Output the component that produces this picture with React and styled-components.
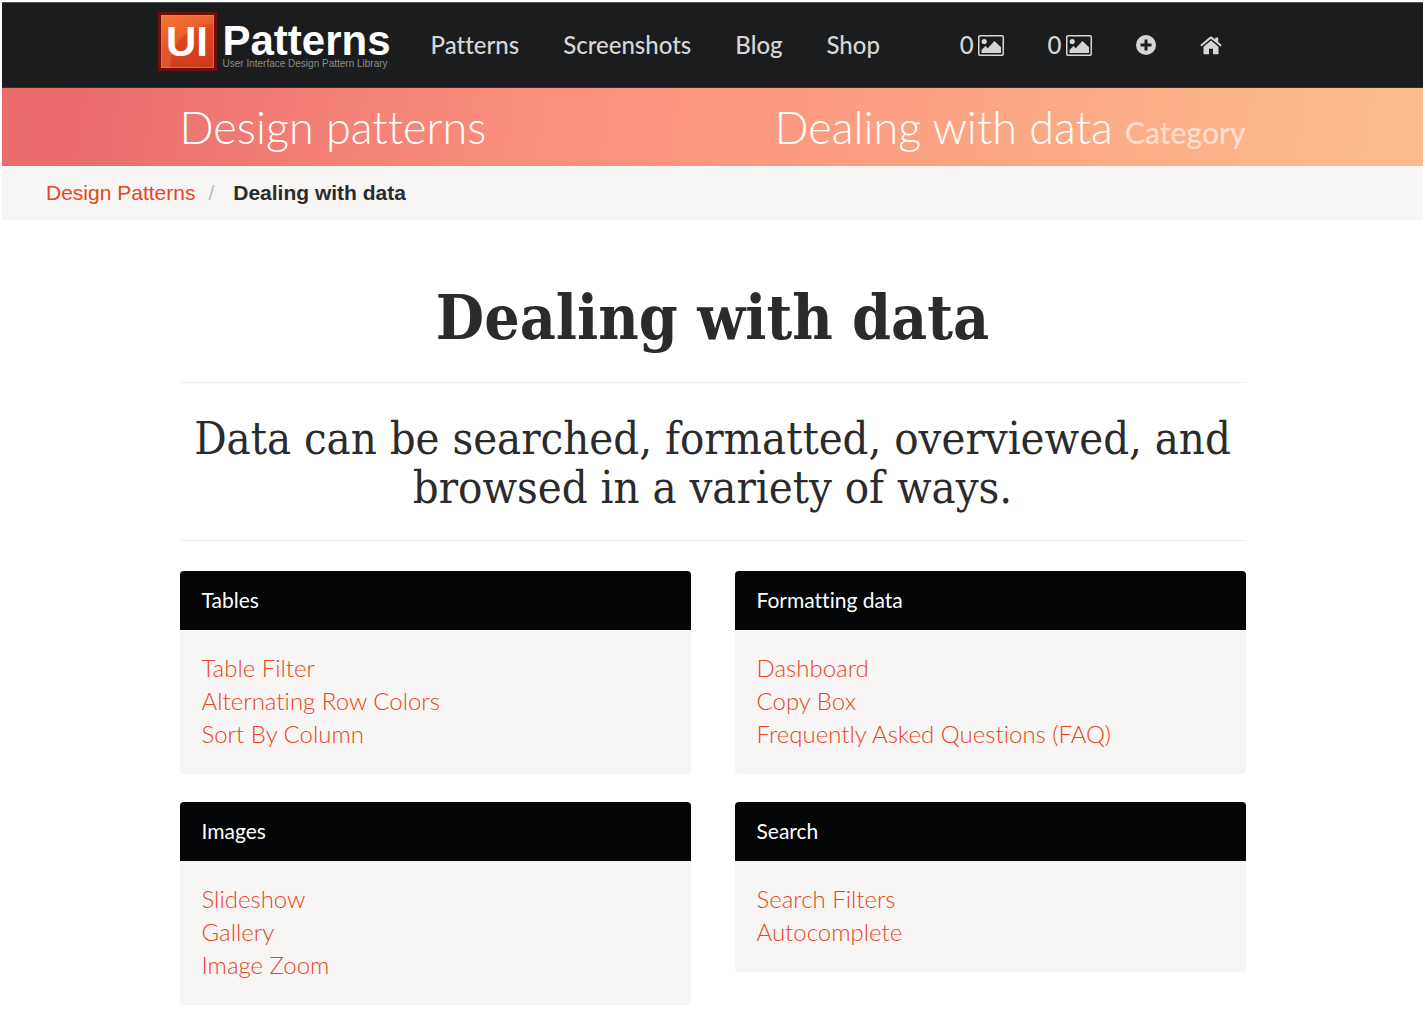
import React from "react";
import styled, { createGlobalStyle } from "styled-components";

const lato = `Lato, "Open Sans", sans-serif`;
const helvetica = `"Liberation Sans", Arial, sans-serif`;
const slab = `"Roboto Slab", "DejaVu Serif Condensed", "DejaVu Serif", serif`;

const GlobalStyle = createGlobalStyle`
  * { box-sizing: border-box; }
  body {
    margin: 0;
    padding: 2px;
    background: #fff;
    color: #2b2b2b;
    font-family: ${lato};
    font-variant-ligatures: none;
  }
  a { text-decoration: none; }
  h1, h2, h3, p, ul, ol { margin: 0; padding: 0; font-weight: inherit; }
  ul, ol { list-style: none; }
`;

const Header = styled.header`
  background: #1b1c1d;
  border-top: 1px solid #555;
  border-bottom: 1px solid #3a2c2a;
`;

const HeaderInner = styled.div`
  display: flex;
  align-items: center;
  max-width: 1110px;
  height: 84px;
  margin: 0 auto;
  padding-right: 24px;
`;

const Logo = styled.a`
  display: flex;
  gap: 6px;
  height: 66px;
  margin-right: 16px;
  font-family: ${helvetica};
`;

const LogoMark = styled.span`
  display: flex;
  align-items: center;
  justify-content: center;
  width: 59px;
  height: 59px;
  border: 3px solid #6d0f0b;
  background:
    radial-gradient(circle at 100% 100%, rgba(190, 50, 20, 0) 58%, rgba(255, 150, 80, 0.25) 60%),
    linear-gradient(160deg, #ef6a2c 0%, #e0421f 50%, #c93a1c 100%);
  box-shadow: inset 0 0 0 1px rgba(255, 130, 60, 0.5);
  color: #fff;
  font-size: 42px;
  font-weight: 700;
  line-height: 53px;
`;

const LogoText = styled.span`
  display: flex;
  flex-direction: column;
  padding-top: 8px;
`;

const LogoName = styled.span`
  color: #fff;
  font-size: 42px;
  font-weight: 700;
  line-height: 42px;
  height: 38px;
`;

const LogoTagline = styled.span`
  color: #8c8c8c;
  font-size: 10px;
  line-height: 12px;
`;

const NavList = styled.ul`
  display: flex;
  margin-left: ${(p) => (p.$end ? "auto" : "2px")};
`;

const NavLink = styled.a`
  display: flex;
  align-items: center;
  gap: 4px;
  height: 76px;
  padding: 0 22px;
  color: #d6d6d6;
  font-size: 24px;
  line-height: 32px;
  font-weight: 500;

  svg { display: block; fill: currentColor; }
`;

const Banner = styled.div`
  background: linear-gradient(100deg, #ea6c6c 0%, #ea6c6c 4%, #fa8f7c 38%, #fb9a80 55%, #fdbb8c 96%, #fdbb8c 100%);
  color: #fff;
`;

const BannerInner = styled.div`
  display: flex;
  justify-content: space-between;
  max-width: 1066px;
  margin: 0 auto;
`;

const BannerTitle = styled.p`
  font-size: 45px;
  font-weight: 300;
  line-height: 78px;

  small {
    color: rgba(255, 255, 255, 0.6);
    font-size: 30px;
    font-weight: 500;
    line-height: 30px;
  }
`;

const Breadcrumb = styled.ol`
  display: flex;
  padding: 10px 44px;
  background: #f7f6f5;
  font-family: ${helvetica};
  font-size: 21px;
  line-height: 34px;
  color: #2b2b2b;

  a { color: #ea4420; }

  li + li::before {
    content: "/";
    padding: 0 19px 0 13px;
    color: #bbb;
    font-weight: 400;
  }

  [aria-current] { font-weight: 700; }
`;

const Main = styled.main`
  max-width: 1066px;
  margin: 0 auto;
  padding-top: 54px;
`;

const Title = styled.h1`
  padding: 0 0 20px;
  border-bottom: 1px solid #eee;
  font-family: ${slab};
  font-size: 62px;
  font-weight: 700;
  line-height: 88px;
  text-align: center;
`;

const Lead = styled.h2`
  padding: 31px 0 28px;
  border-bottom: 1px solid #eee;
  font-family: ${slab};
  font-size: 45px;
  line-height: 49px;
  text-align: center;
`;

const PanelGrid = styled.div`
  display: grid;
  grid-template-columns: 1fr 1fr;
  align-items: start;
  gap: 28px 44px;
  padding: 30px 0 4px;
`;

const Panel = styled.section`
  border-radius: 4px;
  overflow: hidden;
  background: #f7f6f5;
`;

const PanelTitle = styled.h3`
  padding: 0 22px 2px;
  background: #030506;
  color: #fff;
  font-size: 21px;
  line-height: 57px;
`;

const PanelLinks = styled.ul`
  padding: 21px 22px 24px;
  font-size: 24px;
  font-weight: 300;
  line-height: 33px;

  a { color: #ea4420; }
`;

const PictureIcon = () => (
  <svg width="26" height="21" viewBox="0 0 26 21" aria-hidden="true">
    <path
      fillRule="evenodd"
      d="M2 0h22a2 2 0 0 1 2 2v17a2 2 0 0 1-2 2H2a2 2 0 0 1-2-2V2a2 2 0 0 1 2-2zM2.200 1.500a.7.7 0 0 0-.7.7v16.600a.7.7 0 0 0 .7.7h21.600a.7.700 0 0 0 .7-.7V2.200a.7.7 0 0 0-.7-.7z"
    />
    <circle cx="6.200" cy="6.500" r="2.600" />
    <path d="M3.500 18v-3l4-4 2.200 2.200L16.500 6 23 12.200V18z" />
  </svg>
);

const PlusIcon = () => (
  <svg width="20" height="20" viewBox="0 0 20 20" aria-hidden="true">
    <path
      fillRule="evenodd"
      d="M10 0a10 10 0 1 1 0 20a10 10 0 0 1 0-20zM8.500 4.500v4h-4v3h4v4h3v-4h4v-3h-4v-4z"
    />
  </svg>
);

const HomeIcon = () => (
  <svg width="22" height="19" viewBox="0 0 22 19" aria-hidden="true">
    <path d="M11 4.600l7.500 6.200V17.500q0 .8-.8.8H13v-5.500H9v5.500H4.300q-.8 0-.8-.8V10.800z" />
    <path d="M11 .600q.7 0 1.300.5l2.900 2.400V1.500h3v4.500l3.500 3-1.100 1.400L11 2.800 1.400 10.400.3 9l9.400-7.900Q10.300.6 11 .6z" />
  </svg>
);

const pages = ["Patterns", "Screenshots", "Blog", "Shop"];

const tools = [
  { label: "Collected screenshots", count: 0, Icon: PictureIcon },
  { label: "Uploaded screenshots", count: 0, Icon: PictureIcon },
  { label: "Add", Icon: PlusIcon },
  { label: "Home", Icon: HomeIcon },
];

const panels = [
  { title: "Tables", links: ["Table Filter", "Alternating Row Colors", "Sort By Column"] },
  { title: "Formatting data", links: ["Dashboard", "Copy Box", "Frequently Asked Questions (FAQ)"] },
  { title: "Images", links: ["Slideshow", "Gallery", "Image Zoom"] },
  { title: "Search", links: ["Search Filters", "Autocomplete"] },
];

export default function App() {
  return (
    <>
      <GlobalStyle />
      <Header>
        <HeaderInner>
          <Logo href="#">
            <LogoMark>UI</LogoMark>
            <LogoText>
              <LogoName>Patterns</LogoName>
              <LogoTagline>User Interface Design Pattern Library</LogoTagline>
            </LogoText>
          </Logo>
          <NavList>
            {pages.map((page) => (
              <li key={page}>
                <NavLink href="#">{page}</NavLink>
              </li>
            ))}
          </NavList>
          <NavList $end>
            {tools.map(({ label, count, Icon }) => (
              <li key={label}>
                <NavLink href="#" aria-label={label}>
                  {count}
                  <Icon />
                </NavLink>
              </li>
            ))}
          </NavList>
        </HeaderInner>
      </Header>
      <Banner>
        <BannerInner>
          <BannerTitle>Design patterns</BannerTitle>
          <BannerTitle>
            Dealing with data <small>Category</small>
          </BannerTitle>
        </BannerInner>
      </Banner>
      <nav aria-label="Breadcrumb">
        <Breadcrumb>
          <li>
            <a href="#">Design Patterns</a>
          </li>
          <li aria-current="page">Dealing with data</li>
        </Breadcrumb>
      </nav>
      <Main>
        <Title>Dealing with data</Title>
        <Lead>Data can be searched, formatted, overviewed, and browsed in a variety of ways.</Lead>
        <PanelGrid>
          {panels.map((panel) => (
            <Panel key={panel.title}>
              <PanelTitle>{panel.title}</PanelTitle>
              <PanelLinks>
                {panel.links.map((link) => (
                  <li key={link}>
                    <a href="#">{link}</a>
                  </li>
                ))}
              </PanelLinks>
            </Panel>
          ))}
        </PanelGrid>
      </Main>
    </>
  );
}
